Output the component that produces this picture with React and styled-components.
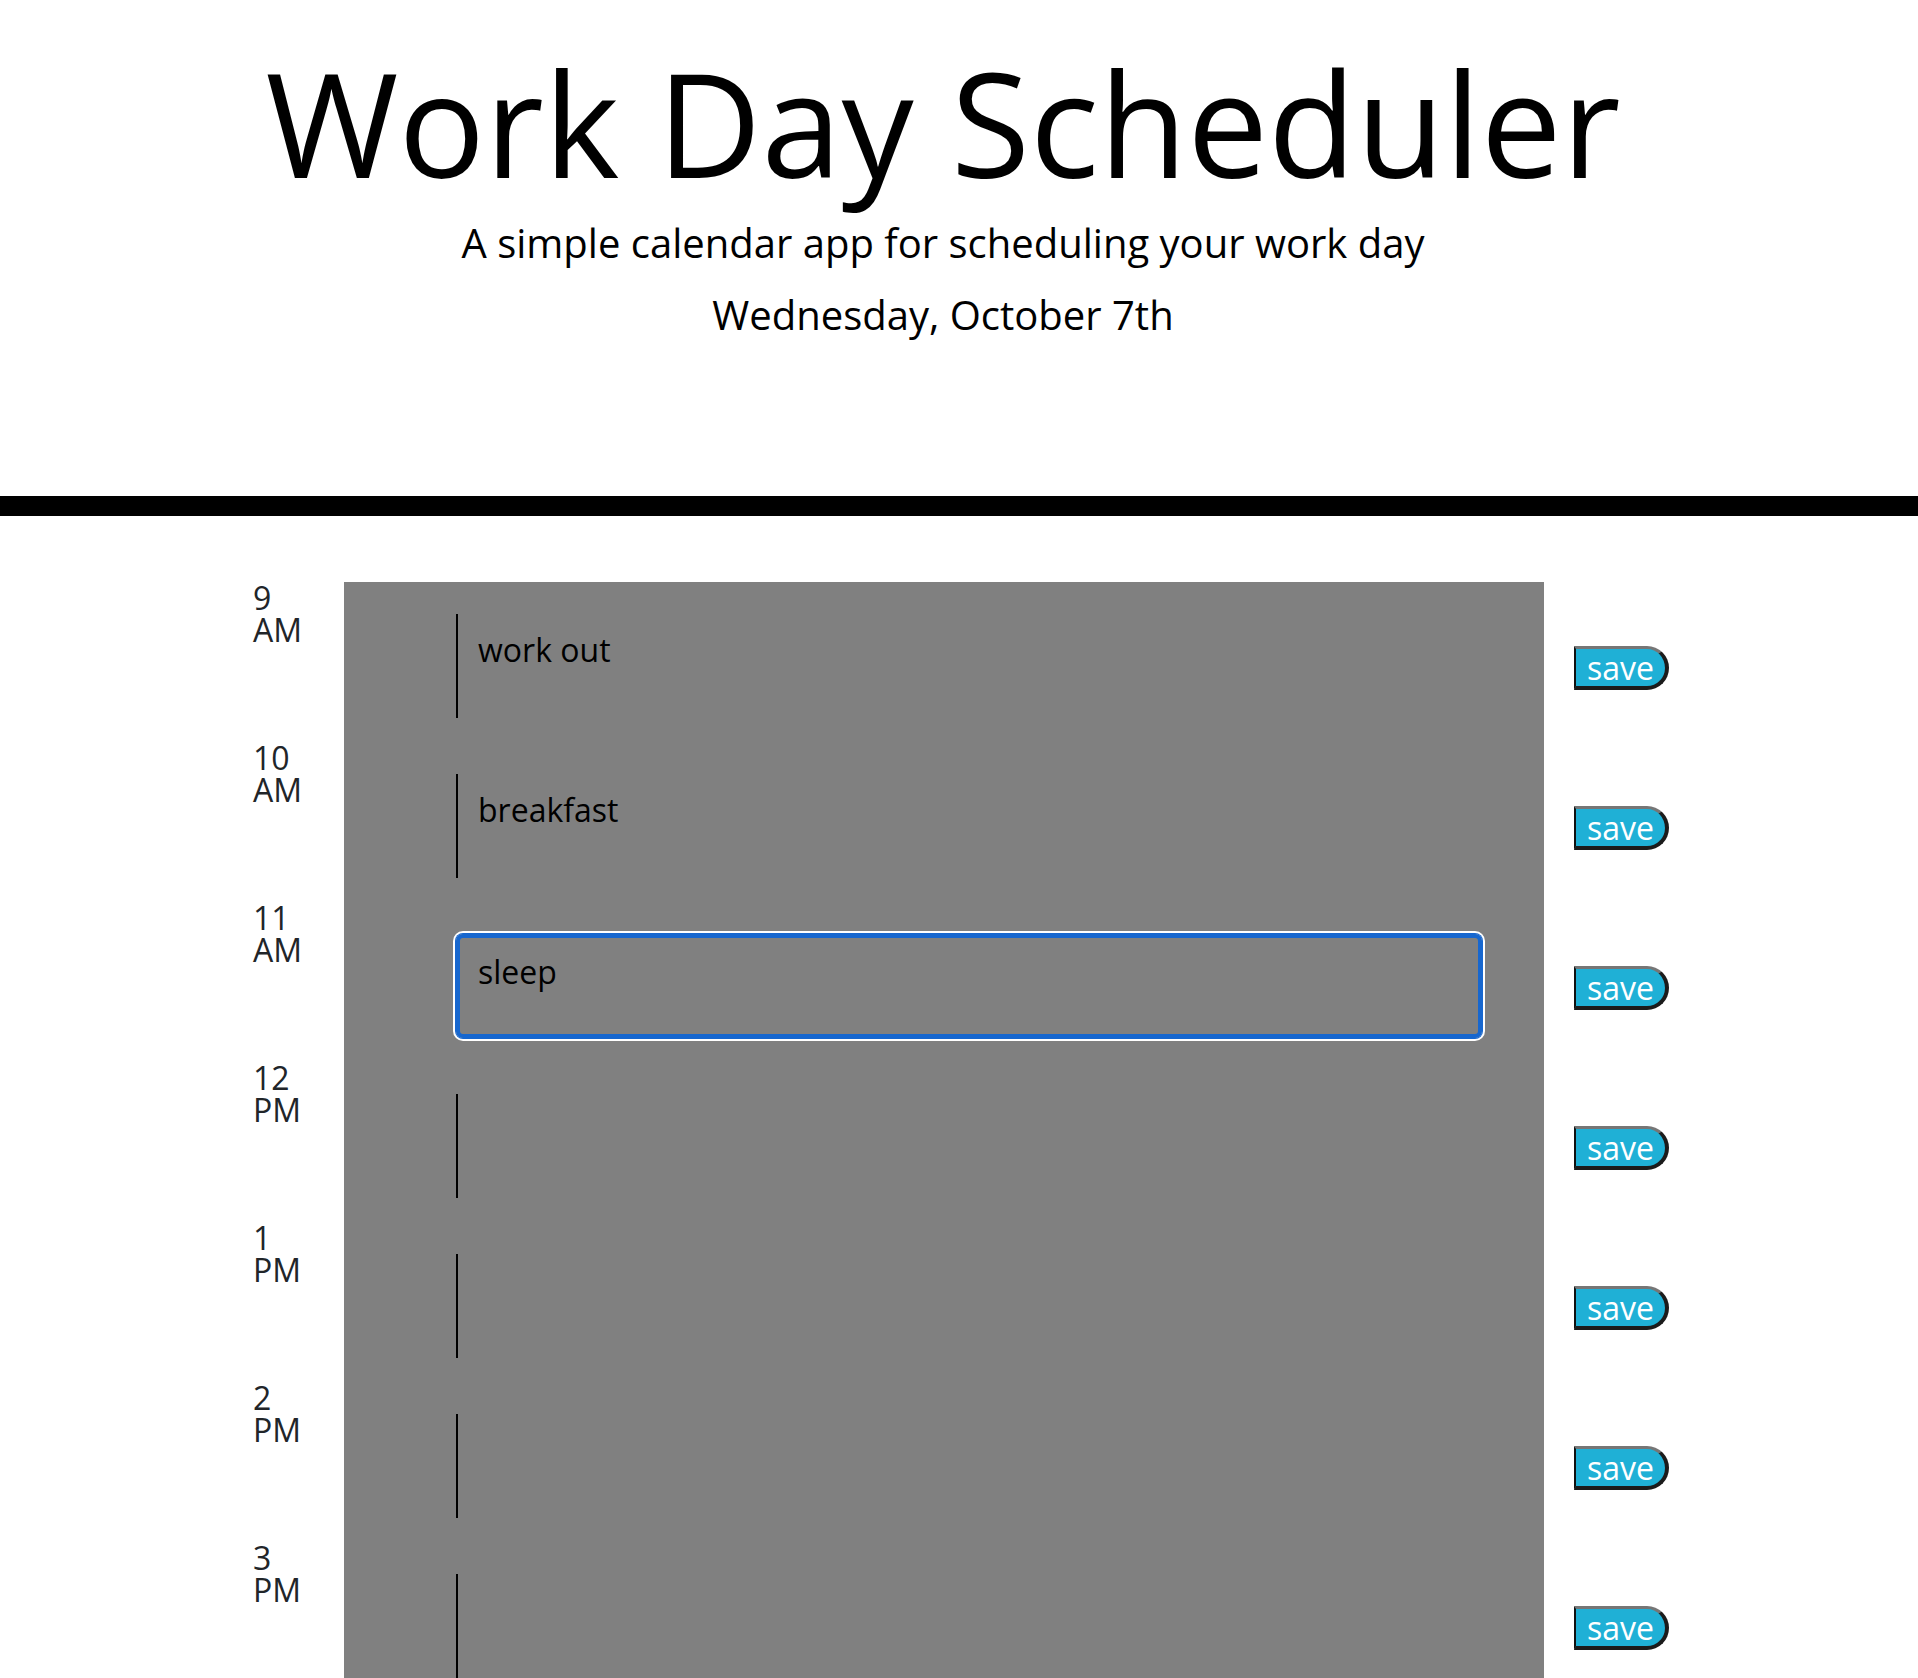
import React from "react";
import styled, { createGlobalStyle, css } from "styled-components";

const GlobalStyle = createGlobalStyle`
  html, body { margin: 0; padding: 0; background: #fff; }
  body { font-family: "Open Sans", "Noto Sans", sans-serif; color: #212529; }
  * { box-sizing: border-box; }
`;

const Header = styled.header`
  padding: 36px 32px 151px 0;
  border-bottom: 20px solid #000;
  text-align: center;
  color: #000;
`;

const Title = styled.h1`
  margin: 0;
  font-size: 144px;
  font-weight: 400;
  line-height: 172px;
`;

const Lead = styled.p`
  margin: ${(p) => p.$mt}px 0 0;
  font-size: 40px;
  font-weight: 400;
  line-height: 60px;
`;

const Schedule = styled.main`
  width: 1416px;
  margin-left: calc(50% - 706px);
  padding-top: 66px;
`;

const Row = styled.div`
  display: grid;
  grid-template-columns: 91px 1200px 95px;
  height: 160px;
`;

const Hour = styled.div`
  font-size: 32px;
  line-height: 32px;
  color: #212529;
`;

const Cell = styled.div`
  background: #808080;
  padding: 32px 62px 24px 112px;
`;

const Entry = styled.textarea`
  display: block;
  width: 100%;
  height: 104px;
  margin: 0;
  padding: 12px 20px;
  resize: none;
  background: transparent;
  border: none;
  border-left: 2px solid #000;
  border-radius: 0;
  font-family: "Open Sans", "Noto Sans", sans-serif;
  font-size: 32px;
  line-height: 48px;
  color: #000;
  outline: none;
  ${(p) =>
    p.$active &&
    css`
      border: 4px solid #1767cf;
      border-radius: 7px;
      box-shadow: 0 0 0 1px #1767cf, 0 0 0 3px #fff;
      padding: 10px 18px;
    `}
`;

const SaveButton = styled.button`
  align-self: start;
  margin: 64px 0 0 30px;
  width: 95px;
  height: 44px;
  padding: 0;
  background: #1fb0d6;
  color: #fff;
  font-family: "Open Sans", "Noto Sans", sans-serif;
  font-size: 32px;
  line-height: 37px;
  text-align: center;
  border-style: solid;
  border-width: 3px 4px 4px 2px;
  border-color: #767676 #1b1b1b #1b1b1b #111;
  border-radius: 0 22px 22px 0;
  cursor: pointer;
`;

const hours = [
  ["9", "AM", "work out"],
  ["10", "AM", "breakfast"],
  ["11", "AM", "sleep", true],
  ["12", "PM", ""],
  ["1", "PM", ""],
  ["2", "PM", ""],
  ["3", "PM", ""],
  ["4", "PM", ""],
  ["5", "PM", ""],
];

export default function App() {
  return (
    <>
      <GlobalStyle />
      <Header>
        <Title>Work Day Scheduler</Title>
        <Lead $mt={5}>A simple calendar app for scheduling your work day</Lead>
        <Lead $mt={12}>Wednesday, October 7th</Lead>
      </Header>
      <Schedule>
        {hours.map(([h, ap, text, active]) => (
          <Row key={h + ap}>
            <Hour>
              {h}
              <br />
              {ap}
            </Hour>
            <Cell>
              <Entry $active={active} defaultValue={text} />
            </Cell>
            <SaveButton>save</SaveButton>
          </Row>
        ))}
      </Schedule>
    </>
  );
}
